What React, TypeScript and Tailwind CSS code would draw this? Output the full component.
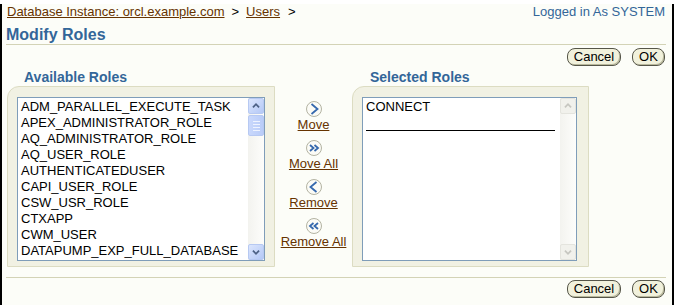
import React from "react";

const availableRoles = [
  "ADM_PARALLEL_EXECUTE_TASK",
  "APEX_ADMINISTRATOR_ROLE",
  "AQ_ADMINISTRATOR_ROLE",
  "AQ_USER_ROLE",
  "AUTHENTICATEDUSER",
  "CAPI_USER_ROLE",
  "CSW_USR_ROLE",
  "CTXAPP",
  "CWM_USER",
  "DATAPUMP_EXP_FULL_DATABASE",
];

function Arrow({ dir, disabled }: { dir: "up" | "down"; disabled?: boolean }) {
  const d = dir === "up" ? "M4.5 9.5 L8 6 L11.5 9.5" : "M4.5 6.5 L8 10 L11.5 6.5";
  return (
    <div
      className={
        disabled
          ? "h-[16px] w-[16px] rounded-[2px] border border-[#e4e4de] bg-[#f1f1ec]"
          : "h-[16px] w-[16px] rounded-[2px] border border-[#b7c9f2] bg-gradient-to-br from-[#dce6fd] to-[#b4c8f6]"
      }
    >
      <svg width="14" height="14" viewBox="0 0 16 16">
        <path d={d} fill="none" stroke={disabled ? "#c6c6c0" : "#4d6185"} strokeWidth="2" />
      </svg>
    </div>
  );
}

function Scrollbar({ disabled }: { disabled?: boolean }) {
  return (
    <div className="flex w-[16px] flex-col bg-gradient-to-r from-[#f3f3ef] to-[#fdfdfb]">
      <Arrow dir="up" disabled={disabled} />
      {!disabled && (
        <div className="mt-[1px] flex h-[21px] w-[16px] flex-col items-center justify-center gap-[2px] rounded-[2px] border border-[#b7c9f2] bg-gradient-to-r from-[#c9d8fc] to-[#b9ccf8]">
          <div className="h-px w-[7px] bg-[#eef3ff]" />
          <div className="h-px w-[7px] bg-[#eef3ff]" />
          <div className="h-px w-[7px] bg-[#eef3ff]" />
          <div className="h-px w-[7px] bg-[#eef3ff]" />
        </div>
      )}
      <div className="flex-1" />
      <Arrow dir="down" disabled={disabled} />
    </div>
  );
}

function Shuttle({ kind, label }: { kind: ">" | ">>" | "<" | "<<"; label: string }) {
  const paths: Record<string, string[]> = {
    ">": ["M5.5 3 L11.5 8 L5.5 13"],
    ">>": ["M4 5 L7.5 8 L4 11", "M8.5 5 L12 8 L8.5 11"],
    "<": ["M10.5 3 L4.5 8 L10.5 13"],
    "<<": ["M7.5 5 L4 8 L7.5 11", "M12 5 L8.5 8 L12 11"],
  };
  return (
    <div className="flex flex-col items-center">
      <svg width="16" height="16" viewBox="0 0 16 16">
        <circle cx="8" cy="8" r="7.5" fill="#fbfbf6" stroke="#b3b3a2" />
        {paths[kind].map((p) => (
          <path key={p} d={p} fill="none" stroke="#3568ad" strokeWidth="1.8" />
        ))}
      </svg>
      <a className="h-[16px] leading-[16px] text-[#663300] underline">{label}</a>
    </div>
  );
}

function Buttons() {
  return (
    <div className="flex justify-end gap-[11px] pr-[1px]">
      <button className="h-[18px] w-[54px] rounded-[8px] border border-[#555548] bg-[#f1f1dc] text-[13px] leading-[16px] text-black shadow-[inset_-1px_-1px_0_#b8b89c]">
        Cancel
      </button>
      <button className="h-[18px] w-[33px] rounded-[8px] border border-[#555548] bg-[#f1f1dc] text-[13px] leading-[16px] text-black shadow-[inset_-1px_-1px_0_#b8b89c]">
        OK
      </button>
    </div>
  );
}

export default function App() {
  return (
    <div className="h-[305px] w-[674px] bg-black pb-[3px] pl-[2px] pr-[2px] font-['Liberation_Sans',Arial,sans-serif] text-[13px]">
      <div className="h-full bg-[#fcfdf8] pl-[4px] pr-[6px]">
        <div className="mt-[4px] flex h-[16px] justify-between leading-[16px]">
          <div className="pl-[1px] text-[#663300]">
            <a className="underline">Database Instance: orcl.example.com</a>
            <span className="px-[7px] text-black">&gt;</span>
            <a className="underline">Users</a>
            <span className="pl-[8px] text-black">&gt;</span>
          </div>
          <div className="pr-[1px] text-[#336699]">Logged in As SYSTEM</div>
        </div>

        <h1 className="mt-[5px] h-[20px] border-b border-[#d3d3b6] text-[16px] font-bold leading-[19px] text-[#336699]">
          Modify Roles
        </h1>

        <div className="mt-[3px]">
          <Buttons />
        </div>

        <div className="mt-[3px] flex">
          <div className="ml-[1px] flex w-[268px] flex-col">
            <div className="h-[17px] pl-[17px] text-[14px] font-bold leading-[17px] text-[#336699]">Available Roles</div>
            <div className="h-[181px] rounded-tl-[12px] border border-[#dcdcc2] bg-[#f1f1e3] pl-[9px] pr-[9px] pt-[10px]">
              <div className="flex h-[164px] border border-[#7f9db9] bg-white">
                <div className="flex-1 pl-[3px] pt-[1px] leading-[16px] text-black">
                  {availableRoles.map((r) => (
                    <div key={r} className="h-[16px] whitespace-nowrap">
                      {r}
                    </div>
                  ))}
                </div>
                <Scrollbar />
              </div>
            </div>
          </div>

          <div className="flex w-[77px] flex-col gap-[7px] pt-[32px]">
            <Shuttle kind=">" label="Move" />
            <Shuttle kind=">>" label="Move All" />
            <Shuttle kind="<" label="Remove" />
            <Shuttle kind="<<" label="Remove All" />
          </div>

          <div className="flex w-[237px] flex-col">
            <div className="h-[17px] pl-[18px] text-[14px] font-bold leading-[17px] text-[#336699]">Selected Roles</div>
            <div className="h-[181px] rounded-tl-[12px] border border-[#dcdcc2] bg-[#f1f1e3] pl-[9px] pr-[11px] pt-[10px]">
              <div className="flex h-[164px] border border-[#7f9db9] bg-white">
                <div className="flex-1 pl-[3px] pt-[1px] leading-[16px] text-black">
                  <div className="h-[16px]">CONNECT</div>
                  <div className="h-[16px] w-[189px] border-b border-black" />
                </div>
                <Scrollbar disabled />
              </div>
            </div>
          </div>
        </div>

        <div className="mt-[10px] border-t border-[#d3d3b6] pt-[2px]">
          <Buttons />
        </div>
      </div>
    </div>
  );
}
